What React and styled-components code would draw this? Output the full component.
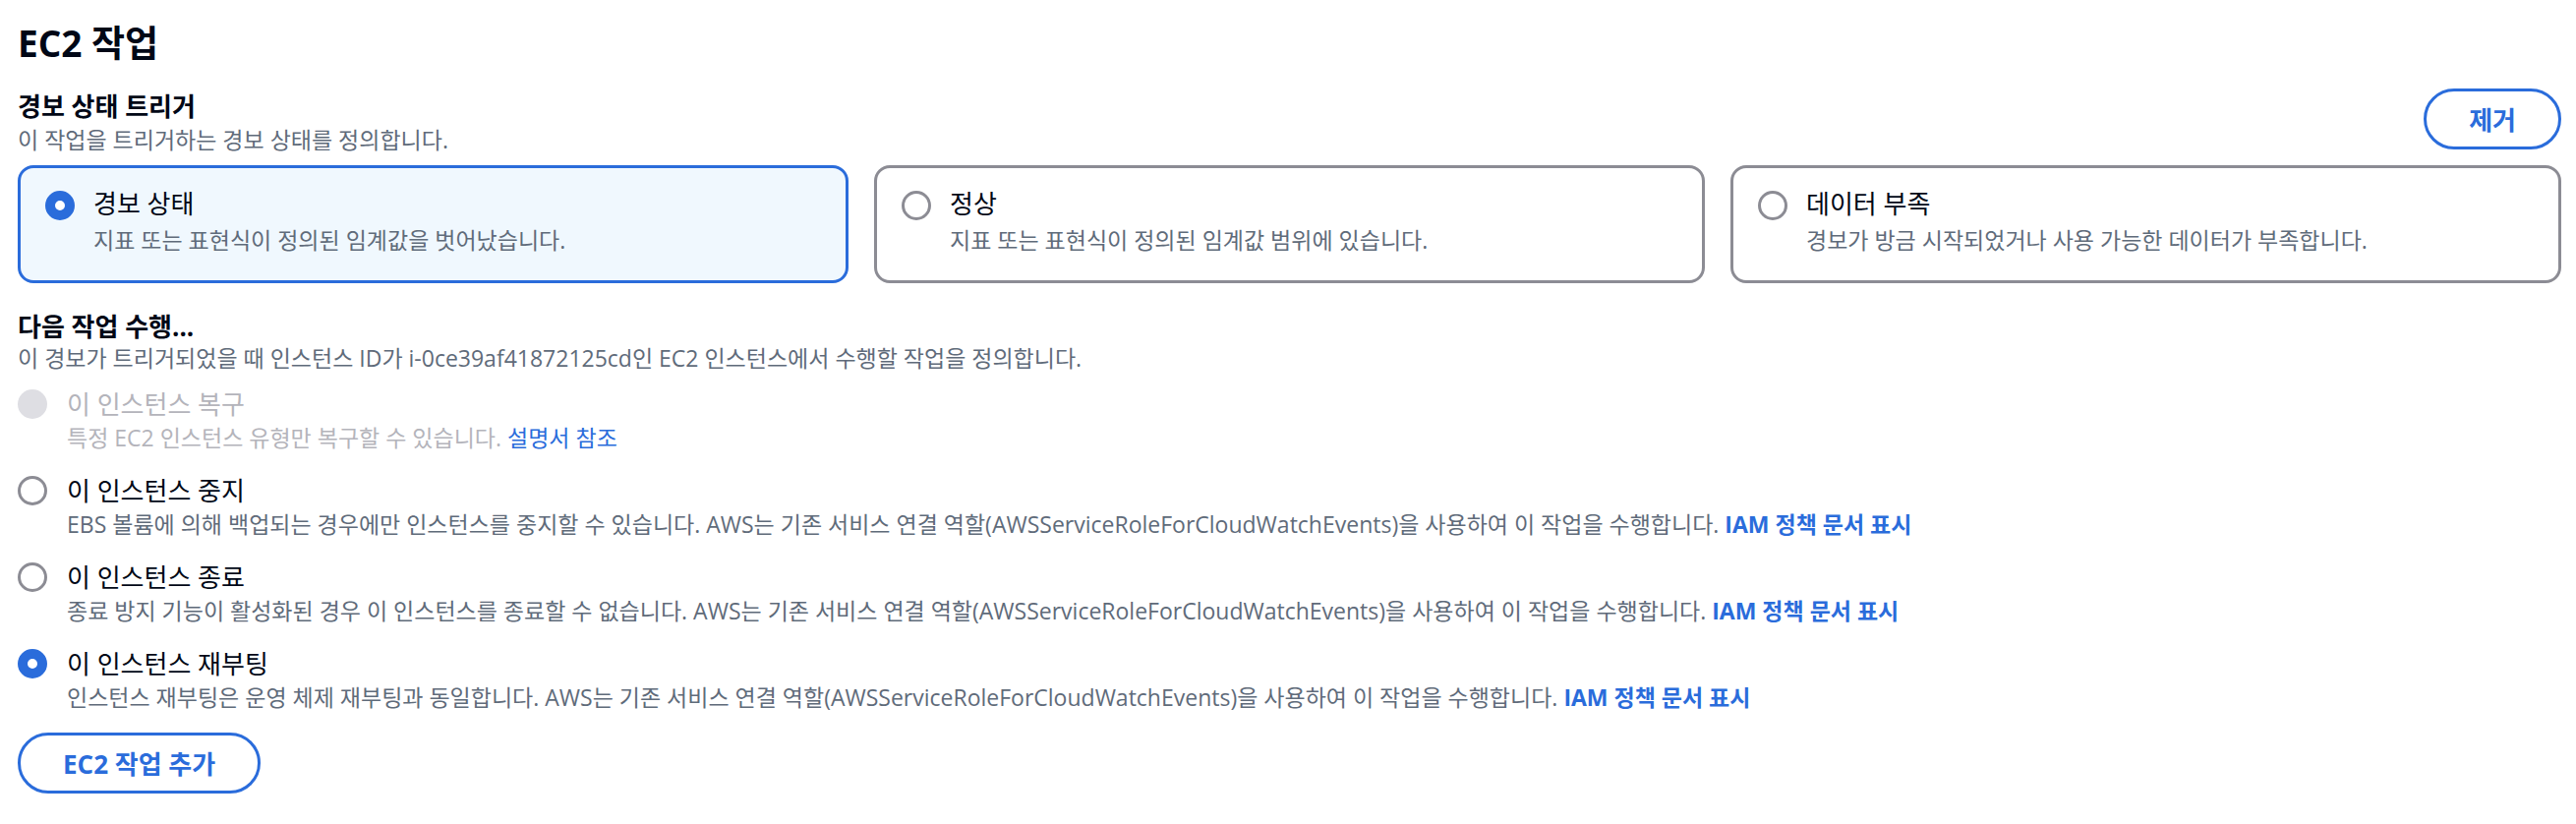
import styled, { createGlobalStyle } from "styled-components";

const BLUE = "#2a6cdb";
const GRAY_BORDER = "#8c8c94";
const TEXT = "#000716";
const MUTED = "#5f6b7a";
const DISABLED = "#b4b4bb";

const GlobalStyle = createGlobalStyle`
  html, body {
    margin: 0;
    background: #ffffff;
  }
  body {
    font-family: "Open Sans", "Noto Sans CJK KR", sans-serif;
    color: ${TEXT};
  }
`;

const Page = styled.div`
  padding: 24px 15px 0 18px;
`;

const Title = styled.h2`
  margin: 0;
  font-size: 37px;
  font-weight: 700;
  line-height: 40px;
`;

const FieldHead = styled.div`
  display: flex;
  justify-content: space-between;
  align-items: flex-start;
  margin-top: ${(p) => p.$top || 0}px;
`;

const Label = styled.div`
  font-size: 26px;
  font-weight: 700;
  line-height: 32px;
`;

const Desc = styled.div`
  font-size: 23px;
  line-height: ${(p) => p.$lh || 36}px;
  color: ${MUTED};
`;

const PillButton = styled.button`
  box-sizing: border-box;
  height: 62px;
  padding: 0 43px;
  margin-top: ${(p) => p.$top || 0}px;
  border: 3px solid ${BLUE};
  border-radius: 31px;
  background: #ffffff;
  color: ${BLUE};
  font-family: inherit;
  font-size: 26px;
  font-weight: 700;
  cursor: pointer;
`;

const Tiles = styled.div`
  display: grid;
  grid-template-columns: repeat(3, 1fr);
  gap: 26px;
  margin-top: 8px;
`;

const Tile = styled.div`
  display: flex;
  gap: 19px;
  padding: 18px 25px 22px;
  border: 3px solid ${(p) => (p.$selected ? BLUE : GRAY_BORDER)};
  border-radius: 16px;
  background: ${(p) => (p.$selected ? "#f0f8fe" : "#ffffff")};
`;

const Radio = styled.span`
  box-sizing: border-box;
  flex-shrink: 0;
  width: 30px;
  height: 30px;
  margin-top: ${(p) => p.$top}px;
  border-radius: 50%;
  background: ${(p) => (p.$disabled ? "#dedee3" : "#ffffff")};
  border: ${(p) =>
    p.$checked
      ? `10px solid ${BLUE}`
      : p.$disabled
      ? "none"
      : `3px solid ${GRAY_BORDER}`};
`;

const OptionLabel = styled.div`
  font-size: 26px;
  line-height: 36px;
  color: ${(p) => (p.$disabled ? DISABLED : TEXT)};
`;

const OptionDesc = styled.div`
  font-size: 23px;
  line-height: ${(p) => p.$lh}px;
  color: ${(p) => (p.$disabled ? DISABLED : MUTED)};
`;

const Link = styled.a`
  color: ${BLUE};
  font-weight: ${(p) => (p.$bold ? 700 : 400)};
  text-decoration: none;
`;

const OptionList = styled.div`
  display: flex;
  flex-direction: column;
  gap: 20px;
  margin-top: 13px;
`;

const Option = styled.div`
  display: flex;
  gap: 20px;
`;

const tiles = [
  { label: "경보 상태", desc: "지표 또는 표현식이 정의된 임계값을 벗어났습니다.", selected: true },
  { label: "정상", desc: "지표 또는 표현식이 정의된 임계값 범위에 있습니다." },
  { label: "데이터 부족", desc: "경보가 방금 시작되었거나 사용 가능한 데이터가 부족합니다." },
];

const ROLE =
  "AWS는 기존 서비스 연결 역할(AWSServiceRoleForCloudWatchEvents)을 사용하여 이 작업을 수행합니다. ";

const options = [
  {
    label: "이 인스턴스 복구",
    desc: "특정 EC2 인스턴스 유형만 복구할 수 있습니다. ",
    link: "설명서 참조",
    disabled: true,
  },
  {
    label: "이 인스턴스 중지",
    desc: "EBS 볼륨에 의해 백업되는 경우에만 인스턴스를 중지할 수 있습니다. " + ROLE,
    link: "IAM 정책 문서 표시",
    bold: true,
  },
  {
    label: "이 인스턴스 종료",
    desc: "종료 방지 기능이 활성화된 경우 이 인스턴스를 종료할 수 없습니다. " + ROLE,
    link: "IAM 정책 문서 표시",
    bold: true,
  },
  {
    label: "이 인스턴스 재부팅",
    desc: "인스턴스 재부팅은 운영 체제 재부팅과 동일합니다. " + ROLE,
    link: "IAM 정책 문서 표시",
    bold: true,
    checked: true,
  },
];

export default function App() {
  return (
    <>
      <GlobalStyle />
      <Page>
        <Title>EC2 작업</Title>

        <FieldHead $top={28}>
          <div>
            <Label>경보 상태 트리거</Label>
            <Desc>이 작업을 트리거하는 경보 상태를 정의합니다.</Desc>
          </div>
          <PillButton $top={-2}>제거</PillButton>
        </FieldHead>

        <Tiles>
          {tiles.map((t) => (
            <Tile key={t.label} $selected={t.selected}>
              <Radio $top={5} $checked={t.selected} />
              <div>
                <OptionLabel>{t.label}</OptionLabel>
                <OptionDesc $lh={38}>{t.desc}</OptionDesc>
              </div>
            </Tile>
          ))}
        </Tiles>

        <FieldHead $top={28}>
          <div>
            <Label>다음 작업 수행...</Label>
            <Desc $lh={32}>
              이 경보가 트리거되었을 때 인스턴스 ID가 i-0ce39af41872125cd인 EC2 인스턴스에서 수행할 작업을 정의합니다.
            </Desc>
          </div>
        </FieldHead>

        <OptionList>
          {options.map((o) => (
            <Option key={o.label}>
              <Radio $top={3} $checked={o.checked} $disabled={o.disabled} />
              <div>
                <OptionLabel $disabled={o.disabled}>{o.label}</OptionLabel>
                <OptionDesc $lh={32} $disabled={o.disabled}>
                  {o.desc}
                  <Link href="#" $bold={o.bold}>
                    {o.link}
                  </Link>
                </OptionDesc>
              </div>
            </Option>
          ))}
        </OptionList>

        <PillButton $top={20}>EC2 작업 추가</PillButton>
      </Page>
    </>
  );
}
